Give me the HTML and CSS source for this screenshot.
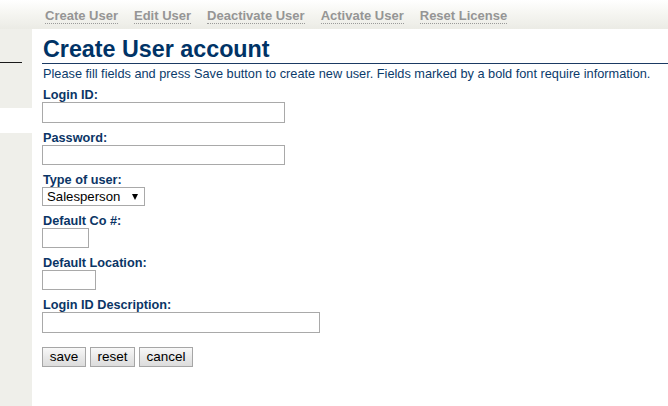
FILE: index.html
```html
<!DOCTYPE html>
<html>
<head>
<meta charset="utf-8">
<title>Create User account</title>
<link rel="stylesheet" href="styles.css">
</head>
<body>
<div class="page">
  <header class="topbar">
    <nav class="nav">
      <a class="nav-link" href="#">Create User</a>
      <a class="nav-link" href="#">Edit User</a>
      <a class="nav-link" href="#">Deactivate User</a>
      <a class="nav-link" href="#">Activate User</a>
      <a class="nav-link" href="#">Reset License</a>
    </nav>
  </header>
  <div class="body-row">
    <aside class="sidebar">
      <div class="side-top"><div class="side-rule"></div></div>
      <div class="side-gap"></div>
      <div class="side-rest"></div>
    </aside>
    <main class="main">
      <h1 class="title">Create User account</h1>
      <p class="intro">Please fill fields and press Save button to create new user. Fields marked by a bold font require information.</p>
      <form class="form">
        <div class="field">
          <label class="label">Login ID:</label>
          <input class="input input-wide input-tall" type="text">
        </div>
        <div class="field">
          <label class="label">Password:</label>
          <input class="input input-wide" type="password">
        </div>
        <div class="field">
          <label class="label">Type of user:</label>
          <span class="select-wrap">
            <select class="select"><option>Salesperson</option></select>
          </span>
        </div>
        <div class="field">
          <label class="label">Default Co #:</label>
          <input class="input input-co" type="text">
        </div>
        <div class="field">
          <label class="label">Default Location:</label>
          <input class="input input-loc" type="text">
        </div>
        <div class="field">
          <label class="label">Login ID Description:</label>
          <input class="input input-desc input-tall" type="text">
        </div>
        <div class="buttons">
          <button class="btn btn-save" type="button">save</button>
          <button class="btn btn-reset" type="button">reset</button>
          <button class="btn btn-cancel" type="button">cancel</button>
        </div>
      </form>
    </main>
  </div>
</div>
</body>
</html>
```
FILE: styles.css
```css
* { box-sizing: border-box; }
html, body { margin: 0; padding: 0; }
body {
  font-family: "Liberation Sans", Arial, sans-serif;
  background: #fff;
  width: 668px;
  height: 406px;
  overflow: hidden;
}
.page { display: flex; flex-direction: column; height: 406px; }

.topbar {
  height: 29px;
  background: linear-gradient(to bottom, #ffffff 0%, #f6f6f2 45%, #ebebe5 100%);
  padding-left: 45px;
  flex: none;
}
.nav { display: flex; gap: 16px; padding-top: 8px; }
.nav-link {
  font-size: 13px;
  font-weight: bold;
  color: #959595;
  text-decoration: none;
  line-height: 15px;
  border-bottom: 1px dotted #9a9a9a;
}

.body-row { display: flex; flex: 1; }
.sidebar { width: 32px; flex: none; display: flex; flex-direction: column; }
.side-top { height: 79px; background: #efefea; padding-top: 33px; }
.side-rule { width: 22px; height: 1px; background: #1a1a1a; }
.side-gap { height: 25px; background: #fff; }
.side-rest { flex: 1; background: #efefea; }

.main { flex: 1; background: #fff; padding-left: 10px; }
.title {
  margin: 7px 0 0 0;
  font-size: 23.3px;
  line-height: 26px;
  font-weight: bold;
  color: #003366;
  border-bottom: 1px solid #1b3a63;
  padding: 0 0 1px 1px;
}
.intro {
  margin: 3px 0 0 1px;
  font-size: 12.75px;
  line-height: 14px;
  color: #0b3b6b;
}
.form { margin-top: 7px; }
.field { display: flex; flex-direction: column; align-items: flex-start; margin-bottom: 8px; }
.label {
  font-size: 12.7px;
  line-height: 14px;
  font-weight: bold;
  color: #0b3566;
  padding-left: 1px;
}
.input {
  height: 20px;
  border: 1px solid #a9a9a9;
  background: #fff;
  margin: 0;
  padding: 0 2px;
  font-family: "Liberation Sans", Arial, sans-serif;
  font-size: 13px;
}
.input-tall { height: 21px; }
.input-wide { width: 243px; }
.input-co { width: 47px; }
.input-loc { width: 54px; }
.input-desc { width: 278px; }

.select-wrap { position: relative; display: inline-block; }
.select {
  -webkit-appearance: none;
  appearance: none;
  width: 103px;
  height: 19px;
  border: 1px solid #a9a9a9;
  border-radius: 0;
  background: #fff;
  font-family: "Liberation Sans", Arial, sans-serif;
  font-size: 13.2px;
  color: #000;
  padding: 0 0 0 4px;
  margin: 0;
}
.select-wrap::after {
  content: "";
  position: absolute;
  right: 7px;
  top: 7px;
  width: 0;
  height: 0;
  border-left: 3.5px solid transparent;
  border-right: 3.5px solid transparent;
  border-top: 6px solid #000;
  pointer-events: none;
}

.buttons { display: flex; gap: 4px; margin-top: 14px; }
.btn {
  height: 20px;
  border: 1px solid #a6a6a6;
  border-radius: 0;
  background: linear-gradient(to bottom, #f8f8f8 0%, #e9e9e9 50%, #dcdcdc 100%);
  font-family: "Liberation Sans", Arial, sans-serif;
  font-size: 13.5px;
  color: #000;
  padding: 0;
  margin: 0;
  line-height: 18px;
}
.btn-save { width: 44px; }
.btn-reset { width: 45px; }
.btn-cancel { width: 54px; }
```
